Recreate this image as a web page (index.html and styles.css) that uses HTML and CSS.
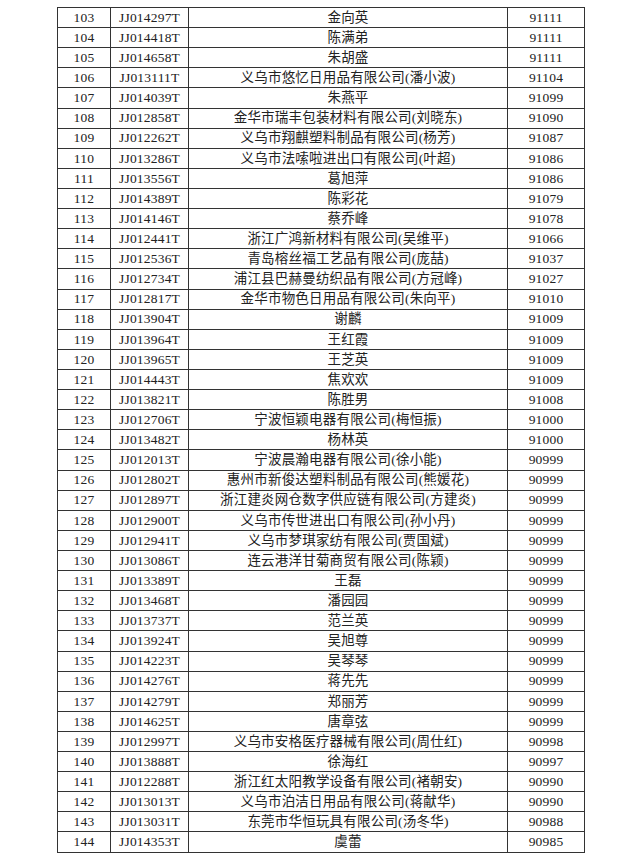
FILE: index.html
```html
<!DOCTYPE html>
<html lang="zh-CN">
<head>
<meta charset="utf-8">
<title>名单</title>
<link rel="stylesheet" href="styles.css">
</head>
<body>
<div class="sheet">
<div class="c">103</div><div class="c">JJ014297T</div><div class="c">金向英</div><div class="c">91111</div>
<div class="c">104</div><div class="c">JJ014418T</div><div class="c">陈满弟</div><div class="c">91111</div>
<div class="c">105</div><div class="c">JJ014658T</div><div class="c">朱胡盛</div><div class="c">91111</div>
<div class="c">106</div><div class="c">JJ013111T</div><div class="c">义乌市悠忆日用品有限公司(潘小波)</div><div class="c">91104</div>
<div class="c">107</div><div class="c">JJ014039T</div><div class="c">朱燕平</div><div class="c">91099</div>
<div class="c">108</div><div class="c">JJ012858T</div><div class="c">金华市瑞丰包装材料有限公司(刘晓东)</div><div class="c">91090</div>
<div class="c">109</div><div class="c">JJ012262T</div><div class="c">义乌市翔麒塑料制品有限公司(杨芳)</div><div class="c">91087</div>
<div class="c">110</div><div class="c">JJ013286T</div><div class="c">义乌市法嗦啦进出口有限公司(叶超)</div><div class="c">91086</div>
<div class="c">111</div><div class="c">JJ013556T</div><div class="c">葛旭萍</div><div class="c">91086</div>
<div class="c">112</div><div class="c">JJ014389T</div><div class="c">陈彩花</div><div class="c">91079</div>
<div class="c">113</div><div class="c">JJ014146T</div><div class="c">蔡乔峰</div><div class="c">91078</div>
<div class="c">114</div><div class="c">JJ012441T</div><div class="c">浙江广鸿新材料有限公司(吴维平)</div><div class="c">91066</div>
<div class="c">115</div><div class="c">JJ012536T</div><div class="c">青岛榕丝福工艺品有限公司(庞喆)</div><div class="c">91037</div>
<div class="c">116</div><div class="c">JJ012734T</div><div class="c">浦江县巴赫曼纺织品有限公司(方冠峰)</div><div class="c">91027</div>
<div class="c">117</div><div class="c">JJ012817T</div><div class="c">金华市物色日用品有限公司(朱向平)</div><div class="c">91010</div>
<div class="c">118</div><div class="c">JJ013904T</div><div class="c">谢麟</div><div class="c">91009</div>
<div class="c">119</div><div class="c">JJ013964T</div><div class="c">王红霞</div><div class="c">91009</div>
<div class="c">120</div><div class="c">JJ013965T</div><div class="c">王芝英</div><div class="c">91009</div>
<div class="c">121</div><div class="c">JJ014443T</div><div class="c">焦欢欢</div><div class="c">91009</div>
<div class="c">122</div><div class="c">JJ013821T</div><div class="c">陈胜男</div><div class="c">91008</div>
<div class="c">123</div><div class="c">JJ012706T</div><div class="c">宁波恒颖电器有限公司(梅恒振)</div><div class="c">91000</div>
<div class="c">124</div><div class="c">JJ013482T</div><div class="c">杨林英</div><div class="c">91000</div>
<div class="c">125</div><div class="c">JJ012013T</div><div class="c">宁波晨瀚电器有限公司(徐小能)</div><div class="c">90999</div>
<div class="c">126</div><div class="c">JJ012802T</div><div class="c">惠州市新俊达塑料制品有限公司(熊媛花)</div><div class="c">90999</div>
<div class="c">127</div><div class="c">JJ012897T</div><div class="c">浙江建炎网仓数字供应链有限公司(方建炎)</div><div class="c">90999</div>
<div class="c">128</div><div class="c">JJ012900T</div><div class="c">义乌市传世进出口有限公司(孙小丹)</div><div class="c">90999</div>
<div class="c">129</div><div class="c">JJ012941T</div><div class="c">义乌市梦琪家纺有限公司(贾国斌)</div><div class="c">90999</div>
<div class="c">130</div><div class="c">JJ013086T</div><div class="c">连云港洋甘菊商贸有限公司(陈颖)</div><div class="c">90999</div>
<div class="c">131</div><div class="c">JJ013389T</div><div class="c">王磊</div><div class="c">90999</div>
<div class="c">132</div><div class="c">JJ013468T</div><div class="c">潘园园</div><div class="c">90999</div>
<div class="c">133</div><div class="c">JJ013737T</div><div class="c">范兰英</div><div class="c">90999</div>
<div class="c">134</div><div class="c">JJ013924T</div><div class="c">吴旭尊</div><div class="c">90999</div>
<div class="c">135</div><div class="c">JJ014223T</div><div class="c">吴琴琴</div><div class="c">90999</div>
<div class="c">136</div><div class="c">JJ014276T</div><div class="c">蒋先先</div><div class="c">90999</div>
<div class="c">137</div><div class="c">JJ014279T</div><div class="c">郑丽芳</div><div class="c">90999</div>
<div class="c">138</div><div class="c">JJ014625T</div><div class="c">唐章弦</div><div class="c">90999</div>
<div class="c">139</div><div class="c">JJ012997T</div><div class="c">义乌市安格医疗器械有限公司(周仕红)</div><div class="c">90998</div>
<div class="c">140</div><div class="c">JJ013888T</div><div class="c">徐海红</div><div class="c">90997</div>
<div class="c">141</div><div class="c">JJ012288T</div><div class="c">浙江红太阳教学设备有限公司(褚朝安)</div><div class="c">90990</div>
<div class="c">142</div><div class="c">JJ013013T</div><div class="c">义乌市泊洁日用品有限公司(蒋献华)</div><div class="c">90990</div>
<div class="c">143</div><div class="c">JJ013031T</div><div class="c">东莞市华恒玩具有限公司(汤冬华)</div><div class="c">90988</div>
<div class="c">144</div><div class="c">JJ014353T</div><div class="c">虞蕾</div><div class="c">90985</div>
</div>
</body>
</html>
```

FILE: styles.css
```css
html, body {
  margin: 0;
  padding: 0;
  background: #ffffff;
}

body {
  padding: 7px 0 0 57px;
  font-family: "Liberation Serif", "Noto Sans CJK SC", serif;
  font-size: 13.5px;
  color: #222222;
}

.sheet {
  display: grid;
  grid-template-columns: 53px 78px 319px 77px;
  grid-auto-rows: 20.12px;
  width: max-content;
  border-top: 1px solid #333333;
  border-left: 1px solid #333333;
}

.c {
  box-sizing: border-box;
  display: flex;
  align-items: center;
  justify-content: center;
  border-right: 1px solid #333333;
  border-bottom: 1px solid #333333;
  white-space: nowrap;
  line-height: 1;
  letter-spacing: 0.2px;
}
```
